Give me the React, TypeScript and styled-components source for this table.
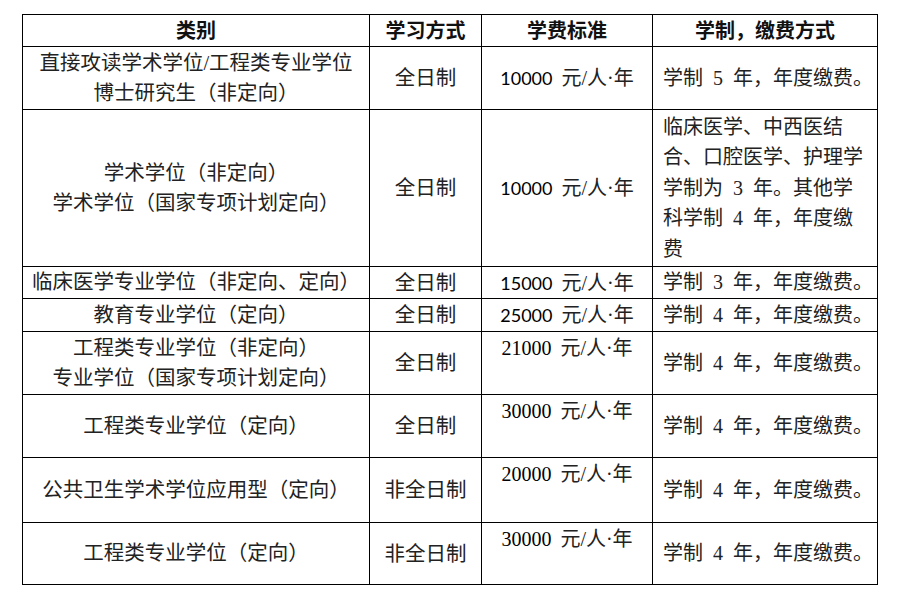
import React from 'react';
import styled, { createGlobalStyle } from 'styled-components';

const GlobalStyle = createGlobalStyle`
  html, body {
    margin: 0;
    padding: 0;
    background: #ffffff;
  }
  body {
    font-family: "Liberation Serif", "Noto Sans CJK SC", serif;
    color: #1a1a1a;
  }
`;

type Row = {
  category: string[];
  mode: string;
  amount: string;
  serifAmount: boolean; // the lower rows use Times-style digits
  note: string[];
  height: number;
};

const rows: Row[] = [
  {
    category: ['直接攻读学术学位/工程类专业学位', '博士研究生（非定向）'],
    mode: '全日制',
    amount: '10000',
    serifAmount: false,
    note: ['学制  5  年，年度缴费。'],
    height: 63,
  },
  {
    category: ['学术学位（非定向）', '学术学位（国家专项计划定向）'],
    mode: '全日制',
    amount: '10000',
    serifAmount: false,
    note: ['临床医学、中西医结', '合、口腔医学、护理学', '学制为  3  年。其他学', '科学制  4  年，年度缴', '费'],
    height: 157,
  },
  {
    category: ['临床医学专业学位（非定向、定向）'],
    mode: '全日制',
    amount: '15000',
    serifAmount: false,
    note: ['学制  3  年，年度缴费。'],
    height: 32,
  },
  {
    category: ['教育专业学位（定向）'],
    mode: '全日制',
    amount: '25000',
    serifAmount: false,
    note: ['学制  4  年，年度缴费。'],
    height: 33,
  },
  {
    category: ['工程类专业学位（非定向）', '专业学位（国家专项计划定向）'],
    mode: '全日制',
    amount: '21000',
    serifAmount: true,
    note: ['学制  4  年，年度缴费。'],
    height: 63,
  },
  {
    category: ['工程类专业学位（定向）'],
    mode: '全日制',
    amount: '30000',
    serifAmount: true,
    note: ['学制  4  年，年度缴费。'],
    height: 63,
  },
  {
    category: ['公共卫生学术学位应用型（定向）'],
    mode: '非全日制',
    amount: '20000',
    serifAmount: true,
    note: ['学制  4  年，年度缴费。'],
    height: 65,
  },
  {
    category: ['工程类专业学位（定向）'],
    mode: '非全日制',
    amount: '30000',
    serifAmount: true,
    note: ['学制  4  年，年度缴费。'],
    height: 62,
  },
];

export default function App() {
  return (
    <>
      <GlobalStyle />
      <Sheet>
        <FeeTable>
          <colgroup>
            <col style={{ width: 347 }} />
            <col style={{ width: 112 }} />
            <col style={{ width: 171 }} />
            <col style={{ width: 225 }} />
          </colgroup>
          <thead>
            <TableRow $height={32}>
              <HeadCell>类别</HeadCell>
              <HeadCell>学习方式</HeadCell>
              <HeadCell>学费标准</HeadCell>
              <HeadCell>学制，缴费方式</HeadCell>
            </TableRow>
          </thead>
          <tbody>
            {rows.map((row, i) => (
              <TableRow key={i} $height={row.height}>
                <CategoryCell>
                  {row.category.map((line, j) => (
                    <Line key={j}>{line}</Line>
                  ))}
                </CategoryCell>
                <ModeCell>{row.mode}</ModeCell>
                <FeeCell $top={row.serifAmount}>
                  <Amount $serif={row.serifAmount}>{row.amount}</Amount> 元/人·年
                </FeeCell>
                <NoteCell>
                  {row.note.map((line, j) => (
                    <Line key={j}>{line}</Line>
                  ))}
                </NoteCell>
              </TableRow>
            ))}
          </tbody>
        </FeeTable>
      </Sheet>
    </>
  );
}

const Sheet = styled.div`
  padding: 14px 0 0 22px;
`;

const FeeTable = styled.table`
  border-collapse: collapse;
  table-layout: fixed;
  width: 855px;
  border: 1px solid #000;
  font-size: 20px;
  line-height: 30px;
`;

const TableRow = styled.tr<{ $height: number }>`
  height: ${(p) => p.$height}px;
`;

const HeadCell = styled.th`
  border: 1px solid #000;
  padding: 0;
  font-family: "Liberation Serif", "Noto Sans CJK SC", serif;
  font-weight: 700;
  color: #111;
  text-align: center;
  vertical-align: middle;
`;

const BodyCell = styled.td`
  border: 1px solid #000;
  padding: 0;
  vertical-align: middle;
  color: #222;
`;

const CategoryCell = styled(BodyCell)`
  text-align: center;
  font-size: 20.5px;
`;

const ModeCell = styled(BodyCell)`
  text-align: center;
  font-size: 20.5px;
`;

const FeeCell = styled(BodyCell)<{ $top: boolean }>`
  text-align: center;
  vertical-align: ${(p) => (p.$top ? 'top' : 'middle')};
  padding-top: ${(p) => (p.$top ? '1px' : '0')};
  white-space: nowrap;
`;

const Amount = styled.span<{ $serif: boolean }>`
  font-family: ${(p) => (p.$serif ? '"Liberation Serif", serif' : 'Lato, "Liberation Sans", sans-serif')};
  font-size: ${(p) => (p.$serif ? '20px' : '18px')};
  color: #000;
  margin-right: 4px;
`;

const NoteCell = styled(BodyCell)`
  text-align: left;
  padding-left: 10px;
  white-space: pre;
`;

const Line = styled.div`
  line-height: 30.5px;
`;
